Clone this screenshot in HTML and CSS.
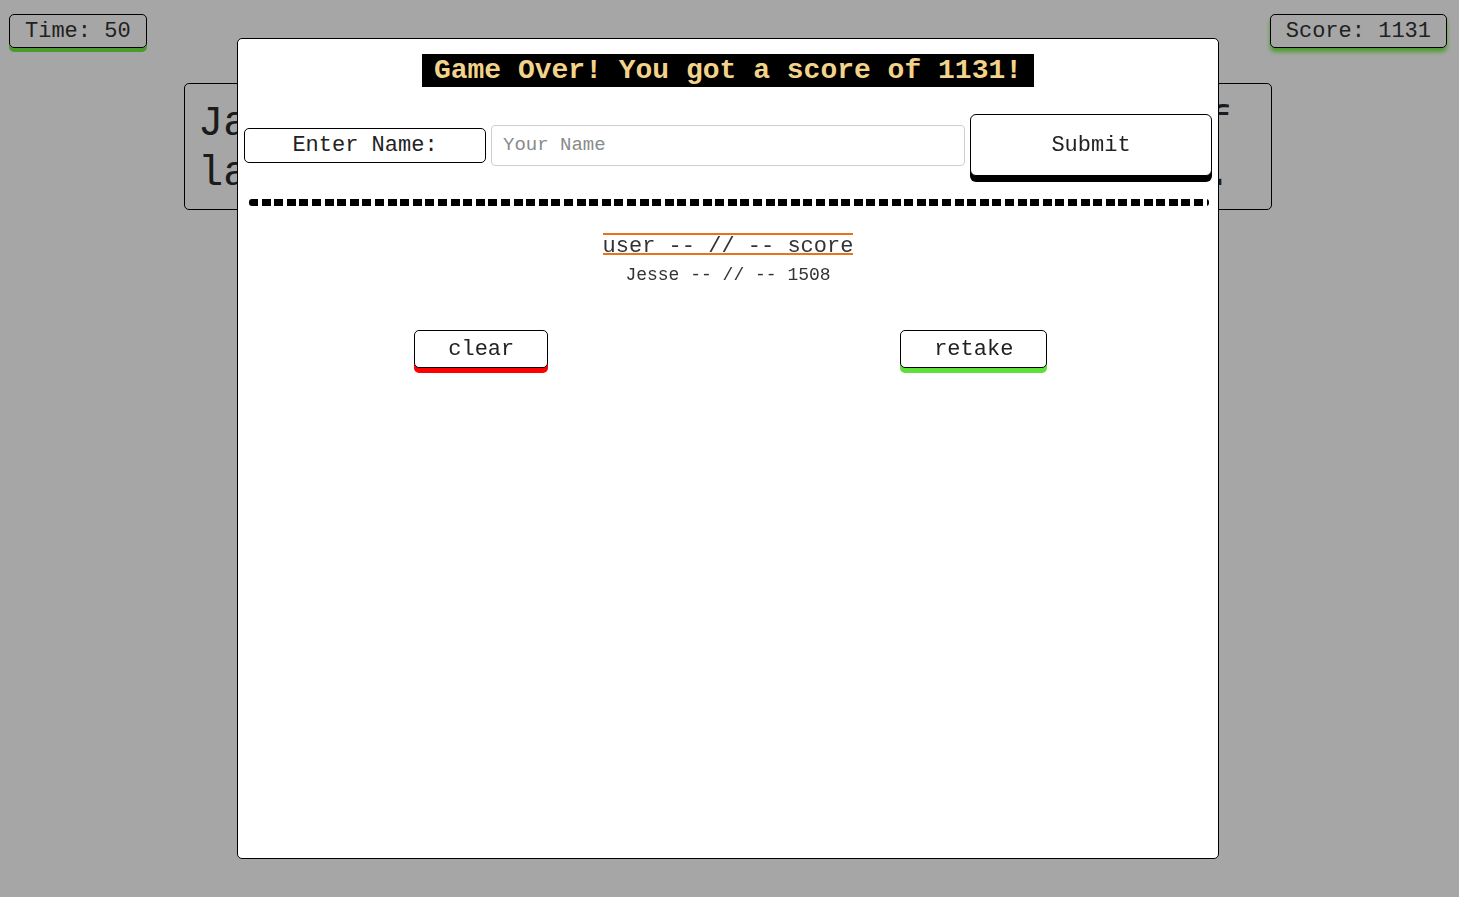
FILE: index.html
```html
<!DOCTYPE html>
<html lang="en">
<head>
<meta charset="utf-8">
<title>Typing Game</title>
<link rel="stylesheet" href="styles.css">
</head>
<body>
<div class="topbar">
  <div class="stat stat-time">Time: 50</div>
  <div class="stat stat-score">Score: 1131</div>
</div>
<div class="card">
  <p class="card-line">Jackdaws love my big sphinx of quartz, if</p>
  <p class="card-line">lazy dogs jump over the quick brown cats.</p>
</div>

<div class="overlay"></div>
<div class="modal">
  <div class="title-wrap">
    <h1 class="title">Game Over! You got a score of 1131!</h1>
  </div>
  <form class="name-row">
    <label class="name-label" for="name">Enter Name:</label>
    <input class="name-input" id="name" type="text" placeholder="Your Name">
    <button class="submit-btn" type="button">Submit</button>
  </form>
  <div class="dots"></div>
  <div class="board">
    <div class="board-head">user -- // -- score</div>
    <div class="board-row">Jesse -- // -- 1508</div>
  </div>
  <div class="actions">
    <div class="action-cell"><button class="act-btn act-clear" type="button">clear</button></div>
    <div class="action-cell"><button class="act-btn act-retake" type="button">retake</button></div>
  </div>
</div>
</body>
</html>
```
FILE: styles.css
```css
* { box-sizing: border-box; }
html, body { margin: 0; padding: 0; }
body {
  background: #ffffff;
  font-family: "Liberation Mono", "Courier New", monospace;
  color: #222;
  width: 1459px;
  height: 897px;
  overflow: hidden;
}
.topbar {
  display: flex;
  justify-content: space-between;
  padding: 14px 12px 0 9px;
}
.stat {
  height: 34px;
  border: 1px solid #000;
  border-radius: 5px;
  font-size: 22px;
  line-height: 33px;
  padding: 0 15px;
  color: #333;
  box-shadow: 0 4px 0 #73ed44;
}
.stat-score { box-shadow: 0 4px 4px #77f048; }
.card {
  margin: 35px 0 0 184px;
  width: 1088px;
  height: 127px;
  border: 1px solid #000;
  border-radius: 5px;
  padding: 15px 13px 0;
  overflow: hidden;
}
.card-line {
  margin: 0;
  font-size: 42px;
  line-height: 50px;
  white-space: nowrap;
  color: #2a2a2a;
}
.overlay {
  position: fixed;
  inset: 0;
  background: rgba(0, 0, 0, 0.35);
}
.modal {
  position: fixed;
  left: 237px;
  top: 38px;
  width: 982px;
  height: 821px;
  background: #fff;
  border: 1px solid #000;
  border-radius: 5px;
  padding-top: 15px;
}
.title-wrap { text-align: center; }
.title {
  display: inline-block;
  margin: 0;
  background: #000;
  color: #f3d38c;
  font-size: 28px;
  font-weight: bold;
  line-height: 33px;
  padding: 0 12px;
}
.name-row {
  margin: 27px 0 0;
  display: grid;
  grid-template-columns: 242px 474px 242px;
  column-gap: 5px;
  padding-left: 6px;
  align-items: center;
}
.name-label {
  height: 35px;
  border: 1px solid #000;
  border-radius: 5px;
  font-size: 22px;
  line-height: 33px;
  text-align: center;
  color: #222;
}
.name-input {
  height: 41px;
  border: 1px solid #cfcfcf;
  border-radius: 4px;
  font-family: "Liberation Mono", "Courier New", monospace;
  font-size: 19px;
  padding: 0 11px;
  color: #222;
  outline: none;
}
.name-input::placeholder { color: #8a8a8a; }
.submit-btn {
  height: 62px;
  background: #fff;
  border: 1px solid #000;
  border-radius: 6px;
  box-shadow: 0 6px 0 #000;
  font-family: "Liberation Mono", "Courier New", monospace;
  font-size: 22px;
  color: #222;
  padding: 0;
}
.dots {
  margin: 23px 9px 0 11px;
  height: 7px;
  border-radius: 3px;
  background: repeating-linear-gradient(to right, #000 0, #000 9px, transparent 9px, transparent 12.6px);
}
.board {
  margin-top: 27px;
  display: flex;
  flex-direction: column;
  align-items: center;
}
.board-head {
  border-top: 2px solid #e8731a;
  border-bottom: 2px solid #e8731a;
  font-size: 22px;
  line-height: 12px;
  padding-top: 6px;
  color: #333;
}
.board-row {
  margin-top: 10px;
  font-size: 18px;
  line-height: 20px;
  color: #333;
}
.actions {
  margin-top: 45px;
  display: grid;
  grid-template-columns: 1fr 1fr;
  padding-right: 1px;
}
.action-cell {
  display: flex;
  justify-content: center;
}
.act-btn {
  height: 38px;
  background: #fff;
  border: 1px solid #000;
  border-radius: 5px;
  font-family: "Liberation Mono", "Courier New", monospace;
  font-size: 22px;
  color: #222;
  padding: 0 33px;
}
.act-clear { box-shadow: 0 5px 0 #ff0000; margin-right: 3px; }
.act-retake { box-shadow: 0 5px 0 #5ce03a; margin-left: 3px; }
```
